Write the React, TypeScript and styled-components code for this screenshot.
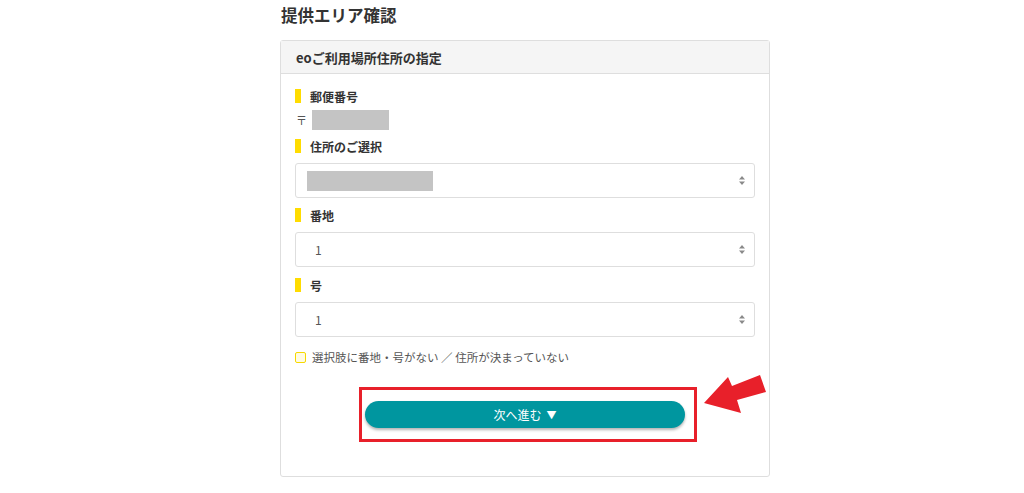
import React from "react";
import styled, { createGlobalStyle } from "styled-components";

const GlobalStyle = createGlobalStyle`
  body {
    margin: 0;
    background: #ffffff;
    font-family: "Noto Sans CJK JP", "Noto Sans", sans-serif;
    color: #333333;
  }
`;

const Page = styled.div`
  width: 490px;
  margin-left: 280px;
`;

const PageTitle = styled.h2`
  margin: 0 0 10px 1px;
  height: 30px;
  line-height: 30px;
  font-size: 16.5px;
  font-weight: 700;
  color: #333333;
`;

const Card = styled.section`
  border: 1px solid #dedede;
  border-radius: 3px;
  background: #ffffff;
`;

const CardHeader = styled.div`
  height: 32px;
  display: flex;
  align-items: center;
  padding: 0 15px;
  background: #f5f5f5;
  border-bottom: 1px solid #dedede;
  font-size: 13px;
  font-weight: 700;
  color: #333333;
`;

const CardBody = styled.div`
  padding: 14px 14px 34px 14px;
`;

const Label = styled.div<{ $gap?: number }>`
  display: flex;
  align-items: center;
  gap: 9px;
  height: 16px;
  margin-top: ${(p) => p.$gap ?? 0}px;
  font-size: 12px;
  font-weight: 700;
  color: #333333;
`;

const LabelBar = styled.span`
  width: 6px;
  height: 14px;
  background: #ffdc00;
`;

const PostalRow = styled.div`
  display: flex;
  align-items: center;
  height: 20px;
  margin-top: 6px;
`;

const PostalMark = styled.span`
  width: 16px;
  padding-left: 1px;
  font-size: 11px;
  color: #555555;
`;

const Masked = styled.span<{ $w: number }>`
  display: block;
  width: ${(p) => p.$w}px;
  height: 20px;
  background: #c4c4c4;
`;

const SelectBox = styled.div`
  height: 33px;
  margin-top: 9px;
  padding: 0 9px 0 11px;
  display: flex;
  align-items: center;
  justify-content: space-between;
  border: 1px solid #dedede;
  border-radius: 3px;
  background: #ffffff;
`;

const SelectValue = styled.span`
  padding-left: 8px;
  font-size: 12px;
  color: #555555;
`;

const CheckRow = styled.label`
  display: flex;
  align-items: center;
  gap: 6px;
  height: 16px;
  margin-top: 12px;
  font-size: 11.5px;
  color: #555555;
`;

const CheckBox = styled.span`
  box-sizing: border-box;
  width: 11px;
  height: 11px;
  border: 1.5px solid #f7d900;
  border-radius: 2px;
  background: #fffbe3;
`;

const ActionRow = styled.div`
  display: flex;
  align-items: flex-start;
  margin-top: 22px;
  padding-left: 64px;
`;

const Highlight = styled.div`
  flex-shrink: 0;
  border: 3px solid #e8202a;
  padding: 11px 9px 11px 3px;
`;

const NextButton = styled.button`
  display: flex;
  align-items: center;
  justify-content: center;
  gap: 5px;
  width: 320px;
  height: 27px;
  border: none;
  border-radius: 14px;
  background: #00969f;
  color: #ffffff;
  font-family: inherit;
  font-size: 12px;
  box-shadow: 0 2px 3px rgba(0, 0, 0, 0.3);
  cursor: pointer;
`;

const Caret = styled.span`
  font-size: 10px;
`;

const Pointer = styled.svg`
  flex-shrink: 0;
  margin: -14px 0 0 4px;
`;

const SortIcon = () => (
  <svg width="6" height="9" viewBox="0 0 6 9">
    <path d="M3 0 L6 3.5 H0 Z M3 9 L0 5.5 H6 Z" fill="#8a8a8a" />
  </svg>
);

const Field = ({ label, gap, children }: { label: string; gap?: number; children: React.ReactNode }) => (
  <>
    <Label $gap={gap}>
      <LabelBar />
      {label}
    </Label>
    {children}
  </>
);

export default function App() {
  return (
    <>
      <GlobalStyle />
      <Page>
        <PageTitle>提供エリア確認</PageTitle>
        <Card>
          <CardHeader>eoご利用場所住所の指定</CardHeader>
          <CardBody>
            <Field label="郵便番号">
              <PostalRow>
                <PostalMark>〒</PostalMark>
                <Masked $w={77} />
              </PostalRow>
            </Field>
            <Field label="住所のご選択" gap={8}>
              <SelectBox>
                <Masked $w={126} />
                <SortIcon />
              </SelectBox>
            </Field>
            <Field label="番地" gap={9}>
              <SelectBox>
                <SelectValue>1</SelectValue>
                <SortIcon />
              </SelectBox>
            </Field>
            <Field label="号" gap={10}>
              <SelectBox>
                <SelectValue>1</SelectValue>
                <SortIcon />
              </SelectBox>
            </Field>
            <CheckRow>
              <CheckBox />
              選択肢に番地・号がない ／ 住所が決まっていない
            </CheckRow>
            <ActionRow>
              <Highlight>
                <NextButton>
                  次へ進む<Caret>▼</Caret>
                </NextButton>
              </Highlight>
              <Pointer width="68" height="42" viewBox="0 0 68 42">
                <polygon
                  points="3,30 27,4 31,13 59,2 65,19 36,27 40,40"
                  fill="#e8202a"
                />
              </Pointer>
            </ActionRow>
          </CardBody>
        </Card>
      </Page>
    </>
  );
}
